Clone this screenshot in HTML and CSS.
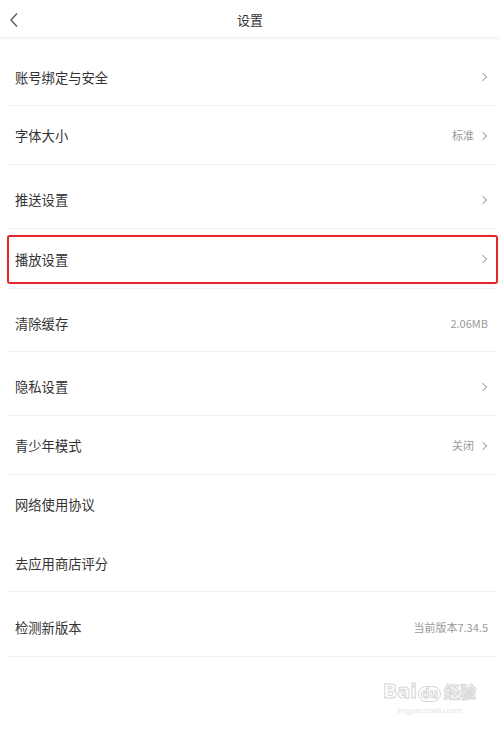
FILE: index.html
```html
<!DOCTYPE html>
<html lang="zh-CN">
<head>
<meta charset="utf-8">
<title>设置</title>
<link rel="stylesheet" href="styles.css">
</head>
<body>
<div class="page">
  <header class="topbar">
    <svg class="back" width="10" height="16" viewBox="0 0 10 16"><path d="M8 1.5 L2 8 L8 14.5" fill="none" stroke="#555" stroke-width="1.3"/></svg>
    <div class="title">设置</div>
  </header>
  <div class="list">
    <div class="row h58"><span class="label">账号绑定与安全</span><span class="right"><i class="chev"></i></span></div>
    <div class="row h59"><span class="label">字体大小</span><span class="right"><span class="val">标准</span><i class="chev"></i></span></div>
    <div class="row h64 tall"><span class="label">推送设置</span><span class="right"><i class="chev"></i></span></div>
    <div class="row h60 highlight"><span class="label">播放设置</span><span class="right"><i class="chev"></i></span></div>
    <div class="row h63 tall"><span class="label">清除缓存</span><span class="right"><span class="val">2.06MB</span></span></div>
    <div class="row h64 tall"><span class="label">隐私设置</span><span class="right"><i class="chev"></i></span></div>
    <div class="row h59"><span class="label">青少年模式</span><span class="right"><span class="val">关闭</span><i class="chev"></i></span></div>
    <div class="row h59 noline"><span class="label">网络使用协议</span></div>
    <div class="row h58"><span class="label">去应用商店评分</span></div>
    <div class="row h65 tall"><span class="label">检测新版本</span><span class="right"><span class="val">当前版本7.34.5</span></span></div>
  </div>
  <div class="watermark">
    <div class="wm-logo"><span class="wm-bai">Bai</span><span class="wm-du">du</span><span class="wm-jy">经验</span></div>
    <div class="wm-url">jingyan.baidu.com</div>
  </div>
</div>
</body>
</html>
```
FILE: styles.css
```css
html, body {
  margin: 0;
  padding: 0;
  background: #fff;
}
body {
  font-family: "Noto Sans CJK SC", "Noto Sans", sans-serif;
  color: #333;
}
.page {
  position: relative;
  width: 500px;
  height: 737px;
  overflow: hidden;
}
.topbar {
  position: relative;
  height: 38px;
  display: flex;
  align-items: center;
  justify-content: center;
  box-shadow: 0 1px 2px rgba(0,0,0,0.05);
  border-bottom: 1px solid #f4f4f4;
  box-sizing: border-box;
}
.back {
  position: absolute;
  left: 9px;
  top: 12px;
}
.title {
  font-size: 13px;
  color: #333;
  line-height: 1;
  margin-top: 1px;
}
.list {
  display: flex;
  flex-direction: column;
  margin-top: 10px;
}
.row {
  position: relative;
  box-sizing: border-box;
  display: flex;
  align-items: center;
  justify-content: space-between;
  margin: 0 4px 0 8px;
  padding: 0 8px 0 7px;
  border-bottom: 1px solid #f1f1f1;
}
.row.tall { padding-top: 5px; }
.row.noline { border-bottom-color: transparent; }
.h58 { height: 58px; }
.h59 { height: 59px; }
.h60 { height: 60px; }
.h63 { height: 63px; }
.h64 { height: 64px; }
.h65 { height: 65px; }
.label {
  font-size: 13.3px;
  color: #333;
  line-height: 1;
  margin-top: 2px;
}
.right {
  display: flex;
  align-items: center;
  gap: 6px;
  margin-top: 1px;
}
.val {
  font-size: 11px;
  color: #9a9a9a;
  line-height: 1;
}
.chev {
  display: block;
  width: 5px;
  height: 5px;
  border-top: 1.2px solid #a8a8a8;
  border-right: 1.2px solid #a8a8a8;
  transform: rotate(45deg);
  margin-right: 2px;
}
.highlight::after {
  content: "";
  position: absolute;
  left: -1px;
  right: -2px;
  top: 6px;
  bottom: 4px;
  border: 2px solid #e2282a;
  border-radius: 3px;
  box-shadow: 0 0 1px rgba(226,40,42,0.4);
}
.watermark {
  position: absolute;
  left: 383px;
  top: 682px;
  color: #fff;
  text-align: center;
}
.wm-logo {
  display: flex;
  align-items: baseline;
  font-family: "DejaVu Sans", sans-serif;
  font-weight: bold;
  font-size: 19px;
  line-height: 1;
  -webkit-text-stroke: 1px #d6d6d6;
  color: #fff;
}
.wm-du {
  font-size: 12px;
  border: 1px solid #d6d6d6;
  border-radius: 8px;
  padding: 1px 2px;
  margin: 0 1px;
}
.wm-jy {
  font-family: "Noto Sans CJK SC", sans-serif;
  font-size: 16px;
  margin-left: 2px;
}
.wm-url {
  font-family: "Liberation Sans", sans-serif;
  font-size: 8px;
  color: #e4e4e4;
  margin-top: 4px;
}
```
